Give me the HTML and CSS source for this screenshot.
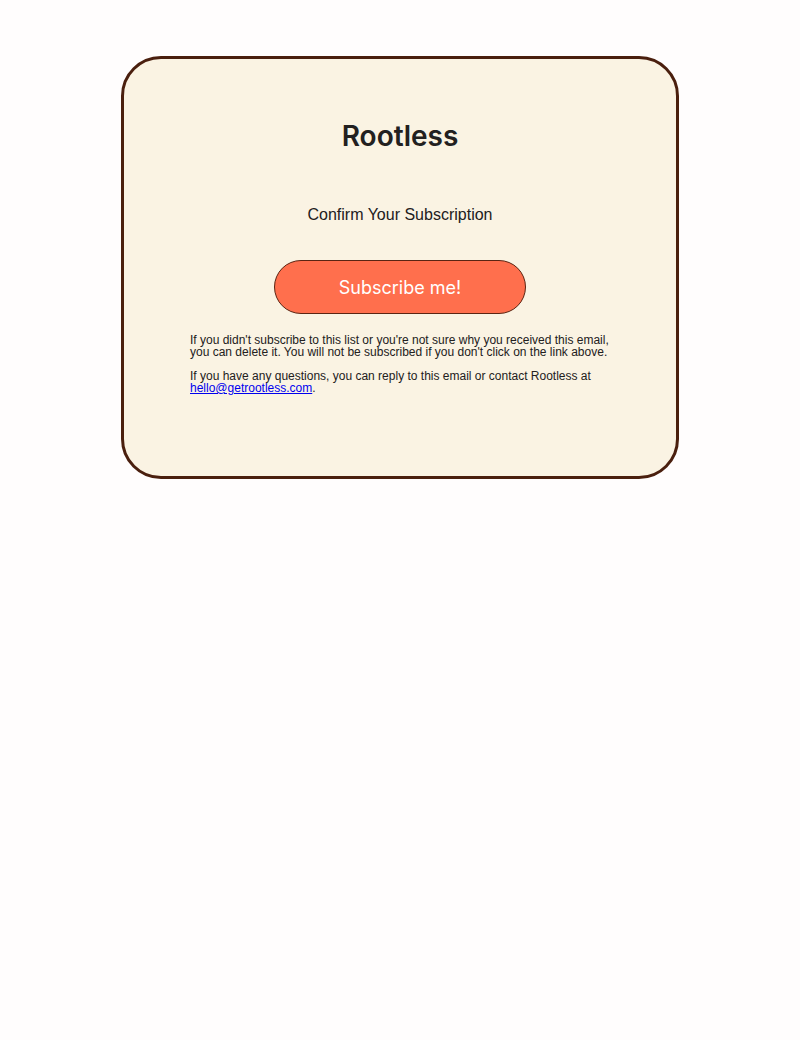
FILE: index.html
```html
<!DOCTYPE html>
<html>
<head>
<meta charset="utf-8">
<link rel="stylesheet" href="styles.css">
</head>
<body>
<div class="card">
  <h1 class="brand">Rootless</h1>
  <p class="subtitle">Confirm Your Subscription</p>
  <div class="cta"><a class="button" href="#">Subscribe me!</a></div>
  <div class="notes">
    <p>If you didn't subscribe to this list or you're not sure why you received this email, you can delete it. You will not be subscribed if you don't click on the link above.</p>
    <p>If you have any questions, you can reply to this email or contact Rootless at <a class="mail" href="#">hello@getrootless.com</a>.</p>
  </div>
</div>
</body>
</html>
```

FILE: styles.css
```css
html, body {
  margin: 0;
  padding: 0;
  background: #fffdfd;
}
body {
  padding-top: 56px;
  font-family: "Liberation Sans", Arial, sans-serif;
}
.card {
  box-sizing: border-box;
  width: 558px;
  height: 423px;
  margin: 0 auto;
  background: #faf3e3;
  border: 3px solid #4a1f0e;
  border-radius: 40px;
  display: flex;
  flex-direction: column;
  align-items: center;
  padding-top: 60px;
}
.brand {
  margin: 0;
  font-family: Inter, "Noto Sans", sans-serif;
  font-weight: 600;
  font-size: 28px;
  line-height: 34px;
  color: #222020;
}
.subtitle {
  margin: 52px 0 0;
  font-size: 16px;
  line-height: 20px;
  color: #222020;
}
.cta {
  margin-top: 35px;
}
.button {
  box-sizing: border-box;
  display: flex;
  align-items: center;
  justify-content: center;
  width: 252px;
  height: 54px;
  background: #ff6f4d;
  border: 1px solid #5a2412;
  border-radius: 27px;
  color: #ffffff;
  text-decoration: none;
  font-family: Inter, "Noto Sans", sans-serif;
  font-size: 18px;
}
.notes {
  width: 420px;
  margin-top: 20px;
  font-size: 12px;
  line-height: 12px;
  color: #222020;
}
.notes p {
  margin: 0 0 12px;
}
.mail {
  color: #0000ee;
  text-decoration: underline;
}
```
